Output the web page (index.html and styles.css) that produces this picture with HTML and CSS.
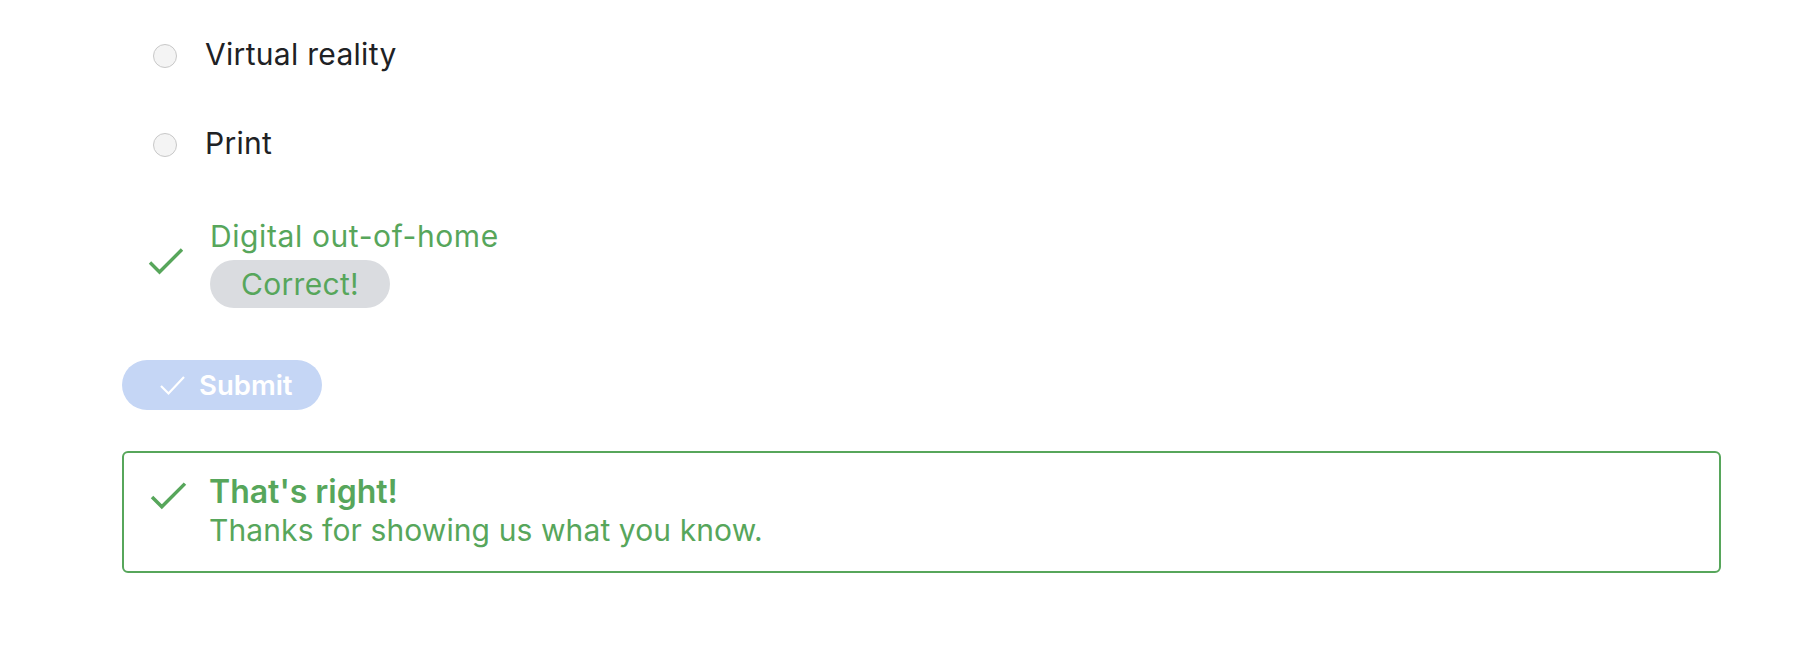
FILE: index.html
```html
<!DOCTYPE html>
<html lang="en">
<head>
<meta charset="utf-8">
<title>Quiz</title>
<link rel="stylesheet" href="styles.css">
</head>
<body>
<main class="quiz">
  <div class="options">
    <label class="option">
      <span class="radio"></span>
      <span class="option-label">Virtual reality</span>
    </label>
    <label class="option">
      <span class="radio"></span>
      <span class="option-label">Print</span>
    </label>
    <div class="option option--correct">
      <svg class="check-icon" width="34" height="26" viewBox="0 0 34 26" aria-hidden="true">
        <polyline points="1,13.5 10.5,23 33,0.5" fill="none" stroke="currentColor" stroke-width="3.4"/>
      </svg>
      <div class="answer">
        <span class="answer-label">Digital out-of-home</span>
        <span class="chip">Correct!</span>
      </div>
    </div>
  </div>

  <button class="submit" type="button" disabled>
    <svg class="submit-icon" width="25" height="21" viewBox="0 0 25 21" aria-hidden="true">
      <polyline points="1,11 8.5,18.5 24,2" fill="none" stroke="currentColor" stroke-width="2.2"/>
    </svg>
    <span>Submit</span>
  </button>

  <section class="feedback">
    <svg class="check-icon feedback-icon" width="35" height="27" viewBox="0 0 34 26" aria-hidden="true">
      <polyline points="1,13.5 10.5,23 33,0.5" fill="none" stroke="currentColor" stroke-width="3.4"/>
    </svg>
    <div class="feedback-text">
      <p class="feedback-title">That's right!</p>
      <p class="feedback-body">Thanks for showing us what you know.</p>
    </div>
  </section>
</main>
</body>
</html>
```

FILE: styles.css
```css
* {
  box-sizing: border-box;
}

html, body {
  margin: 0;
  background: #ffffff;
}

body {
  font-family: Inter, "Noto Sans", Roboto, sans-serif;
  font-size: 30px;
  letter-spacing: 0.3px;
  color: #202124;
}

.quiz {
  padding: 34px 91px 0 122px;
}

.options {
  display: flex;
  flex-direction: column;
  gap: 49px;
}

.option {
  display: flex;
  align-items: center;
  line-height: 40px;
  padding-left: 31px;
}

.radio {
  width: 24px;
  height: 24px;
  border-radius: 50%;
  background: #f4f4f4;
  border: 1.5px solid #c8c8c8;
  margin-top: 4px;
  margin-right: 28px;
  flex-shrink: 0;
}

.option--correct {
  margin-top: 4px;
  padding-left: 27px;
  color: #57a65b;
}

.check-icon {
  flex-shrink: 0;
  overflow: visible;
  color: #57a65b;
}

.option--correct .check-icon {
  margin-right: 27px;
}

.answer {
  display: flex;
  flex-direction: column;
  align-items: flex-start;
}

.answer-label {
  line-height: 40px;
  letter-spacing: 0.6px;
}

.chip {
  margin-top: 4px;
  height: 48px;
  line-height: 48px;
  padding: 0 31px;
  border-radius: 24px;
  background: #dadce0;
  color: #57a65b;
}

.submit {
  display: flex;
  align-items: center;
  margin-top: 52px;
  width: 200px;
  height: 50px;
  padding: 0 0 0 38px;
  border: none;
  border-radius: 25px;
  background: #c5d6f5;
  color: #ffffff;
  font-family: inherit;
  font-size: 27.5px;
  font-weight: 600;
  letter-spacing: 0;
}

.submit-icon {
  margin-right: 14px;
  overflow: visible;
}

.feedback {
  display: flex;
  align-items: flex-start;
  margin-top: 41px;
  height: 122px;
  padding: 20px 0 0 27px;
  border: 2px solid #57a65b;
  border-radius: 6px;
  color: #57a65b;
}

.feedback-icon {
  margin-top: 10px;
  margin-right: 23px;
}

.feedback-text p {
  margin: 0;
}

.feedback-title {
  font-size: 32px;
  font-weight: 600;
  line-height: 38px;
  letter-spacing: 0;
}

.feedback-body {
  line-height: 39px;
  letter-spacing: 0.1px;
}
```
